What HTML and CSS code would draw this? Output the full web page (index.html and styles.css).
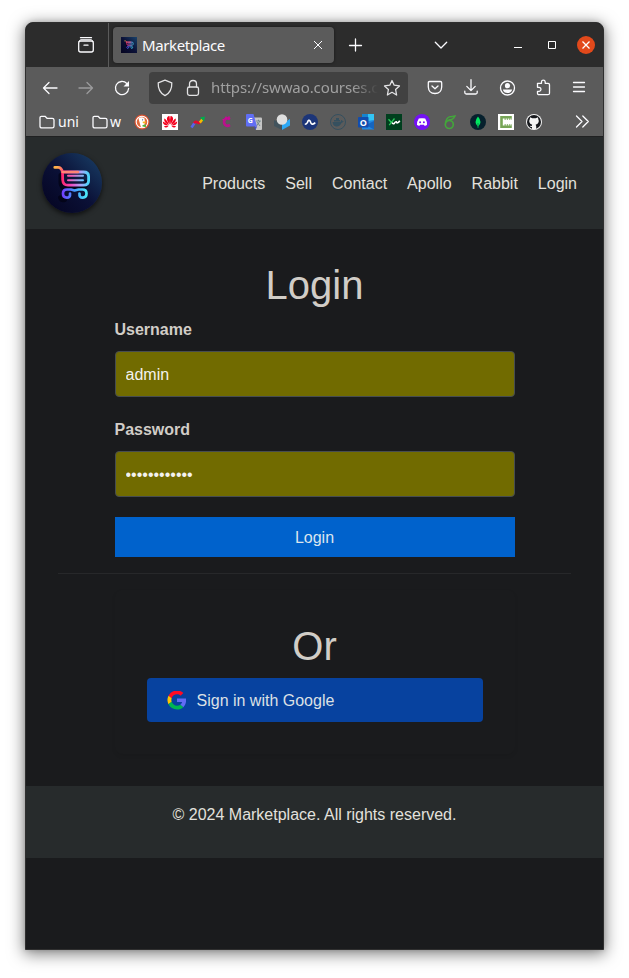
FILE: index.html
```html
<!DOCTYPE html>
<html lang="en">
<head>
<meta charset="utf-8">
<title>Marketplace</title>
<link rel="stylesheet" href="styles.css">
</head>
<body>
<svg class="defs" width="0" height="0" aria-hidden="true">
  <defs>
    <linearGradient id="night" x1="0" y1="1" x2="1" y2="0"><stop offset="0" stop-color="#04031f"/><stop offset=".5" stop-color="#0b1137"/><stop offset="1" stop-color="#1a426a"/></linearGradient>
    <linearGradient id="neon" gradientUnits="userSpaceOnUse" x1="14" y1="16" x2="47" y2="34"><stop offset="0" stop-color="#ffb04a"/><stop offset=".2" stop-color="#ff4d77"/><stop offset=".45" stop-color="#f35ab8"/><stop offset=".75" stop-color="#70c4ff"/><stop offset="1" stop-color="#35dcf4"/></linearGradient>
    <linearGradient id="basket" gradientUnits="userSpaceOnUse" x1="20" y1="26" x2="47" y2="27"><stop offset="0" stop-color="#ff246b"/><stop offset=".35" stop-color="#f04bc0"/><stop offset=".7" stop-color="#aaa5fa"/><stop offset="1" stop-color="#45d7fa"/></linearGradient>
    <linearGradient id="wheels" gradientUnits="userSpaceOnUse" x1="20" y1="40" x2="45" y2="40"><stop offset="0" stop-color="#743bff"/><stop offset=".5" stop-color="#449bff"/><stop offset="1" stop-color="#4ce9f8"/></linearGradient>
    <symbol id="cart" viewBox="0 0 60 60">
      <g fill="none" stroke-linecap="round" stroke-linejoin="round">
        <g stroke="#02020f" stroke-opacity=".65" stroke-width="4" transform="translate(-2 3)"><path d="M20.500 19V27Q21 32.200 26 32.200H41Q46.500 32.200 46.500 26M20 41.500Q21 45 25 44"/></g>
        <path d="M12.800 14.400H16Q19.500 14.400 20.500 19" stroke="url(#neon)" stroke-width="2.800"/>
        <path d="M20.500 19H41.500Q46.600 19 46.600 23.500V27.500Q46.600 32.200 41.500 32.200H26Q21 32.200 20.700 27Z" stroke="url(#basket)" stroke-width="2.800"/>
        <path d="M20.500 19H36" stroke="#ff8575" stroke-width="2.400"/>
        <path d="M26 22.800H41M26 27.300H41" stroke="url(#neon)" stroke-width="2"/>
        <path d="M28 40.500Q28.500 44.700 24.800 44.700Q21 44.500 21 40.500Q21 36.500 25 36.500H29L32.500 37.500L36.500 36.500H40.500Q44.500 36.500 44.500 40.500Q44.500 44.500 40.800 44.700Q37 44.700 37.500 40.500" stroke="url(#wheels)" stroke-width="2.700"/>
      </g>
    </symbol>
  </defs>
</svg>
<div class="window">
  <div class="tabstrip">
    <div class="recent"><svg class="ico" viewBox="0 0 18 18"><path d="M3.500 1.700H14.500"/><rect x="1.700" y="5" width="14.600" height="11" rx="2"/><path d="M7 9.200H11"/><path d="M2 5.500Q2.600 3.700 4 3.700H14Q15.400 3.700 16 5.500" stroke-width="1"/></svg></div>
    <div class="tab">
      <svg class="fav" viewBox="0 0 16 16"><rect width="16" height="16" fill="url(#night)"/><use href="#cart" x=".5" y=".3" width="15" height="15"/></svg>
      <span class="tab-title">Marketplace</span>
      <svg class="tab-x" viewBox="0 0 10 10"><path d="M1 1L9 9M9 1L1 9"/></svg>
    </div>
    <svg class="ico plus" viewBox="0 0 18 18"><path d="M8.500 3V15M2.500 9.500H14.500"/></svg>
    <svg class="ico alltabs" viewBox="0 0 18 18"><path d="M3.300 6.300L9 12L14.700 6.300"/></svg>
    <div class="winbtns">
      <svg viewBox="0 0 18 18"><path d="M5 11.500H13"/></svg>
      <svg viewBox="0 0 18 18"><path d="M5.500 5.500H12.500V12.500H5.500Z"/></svg>
      <svg viewBox="0 0 18 18"><circle cx="9" cy="9" r="9" class="closebg"/><path d="M5.500 5.500L12.500 12.500M12.500 5.500L5.500 12.500" stroke-width="1.300"/></svg>
    </div>
  </div>
  <div class="toolbar">
    <svg class="ico" viewBox="0 0 18 18"><path d="M16 9H2.500M8 3.500L2.500 9L8 14.500"/></svg>
    <svg class="ico dim" viewBox="0 0 18 18"><path d="M2 9H15.500M10 3.500L15.500 9L10 14.500"/></svg>
    <svg class="ico" viewBox="0 0 18 18"><path d="M15.600 9.500A6.600 6.600 0 1 1 13.800 4.500L15.200 6"/><path d="M16 2V7.500H10.500Z" fill="#fbfbfe" stroke="none"/></svg>
    <div class="urlbar">
      <svg class="ico soft" viewBox="0 0 18 18"><path d="M9 1.200L15.800 3.800Q16.200 13 9 16.700Q1.800 13 2.200 3.800Z"/></svg>
      <svg class="ico soft" viewBox="0 0 18 18"><rect x="3.500" y="8" width="11" height="8.400" rx="1.800"/><path d="M5.500 8V5Q5.500 1.500 9 1.500Q12.500 1.500 12.500 5V8"/></svg>
      <span class="url">https://swwao.courses.c</span>
      <svg class="ico soft star" viewBox="0 0 18 18"><path d="M9 1.500L11.200 6.200L16.500 6.900L12.600 10.500L13.600 16L9 13.300L4.400 16L5.400 10.500L1.500 6.900L6.800 6.200Z"/></svg>
    </div>
    <div class="actions">
      <svg class="ico" viewBox="0 0 18 18"><path d="M3.600 2.500H14.400Q15.700 2.500 15.700 3.800V8Q15.300 14.500 9 14.500Q2.700 14.500 2.300 8V3.800Q2.300 2.500 3.600 2.500ZM6 7L9 9.800L12 7"/></svg>
      <svg class="ico" viewBox="0 0 18 18"><path d="M9 .7V11.500M4.800 7.400L9 11.600L13.200 7.400M2.800 12.200V13.500Q2.800 15 4.300 15H13.700Q15.200 15 15.200 13.500V12.200"/></svg>
      <svg class="ico" viewBox="0 0 18 18"><circle cx="9.500" cy="9" r="7"/><circle cx="9.500" cy="6.700" r="2.600" fill="#fbfbfe" stroke="none"/><path d="M4.800 10.500H14.200Q13.200 14 9.500 14Q5.800 14 4.800 10.500Z" fill="#fbfbfe" stroke="none"/></svg>
      <svg class="ico" viewBox="0 0 18 18"><path d="M3.500 4.300H7.500V2.800Q7.600 1.200 9.300 1.200Q11 1.200 11.200 2.800V4.300H14Q15.500 4.300 15.500 5.800V14.200Q15.500 15.700 14 15.700H5Q3.500 15.700 3.500 14.200V12.300H5.200Q7 12 7 10.200Q7 8.500 5.200 8.300H3.500V4.300"/></svg>
      <svg class="ico" viewBox="0 0 18 18"><path d="M3.500 3.500H14.500M3.500 8H14.500M3.500 12.500H14.500"/></svg>
    </div>
  </div>
  <div class="bookmarks">
    <div class="folder"><svg class="ico" viewBox="0 0 18 18"><path d="M3.300 3.300H7L9 5.300H14.200Q16 5.300 16 7V13.200Q16 14.900 14.200 14.900H3.800Q2 14.900 2 13.200V4.600Q2 3.300 3.300 3.300Z"/></svg><span>uni</span></div>
    <div class="folder second"><svg class="ico" viewBox="0 0 18 18"><path d="M3.300 3.300H7L9 5.300H14.200Q16 5.300 16 7V13.200Q16 14.900 14.200 14.900H3.800Q2 14.900 2 13.200V4.600Q2 3.300 3.300 3.300Z"/></svg><span>w</span></div>
    <div class="sites">
      <svg viewBox="0 0 16 16"><circle cx="8" cy="8" r="7.500" fill="#d9502e"/><circle cx="8" cy="8" r="5.800" fill="#e06a3c" stroke="#fff" stroke-width="1.100"/><path d="M4.500 4.500Q7.500 2 10.500 4.500L11 8L9.700 13.500H7Z" fill="#fff"/><circle cx="8.600" cy="5.800" r=".6" fill="#38547a"/><path d="M8.500 7.800L12 7.300L11.500 9.200H9Z" fill="#f9b51d"/><path d="M8.500 11L12 10.500V13L8.500 12.500Z" fill="#4eb33d"/></svg>
      <svg viewBox="0 0 16 16"><rect width="16" height="16" fill="#fff"/><g fill="#f5001d"><path d="M7.600 10.500Q3.800 5.500 5.300 3.200Q6 2 7.500 2Q8.300 5 7.600 10.500ZM8.400 10.500Q12.200 5.500 10.700 3.200Q10 2 8.500 2Q7.700 5 8.400 10.500Z"/><path d="M7 11Q1.500 8.500 2.200 4.500Q5 5.500 7 11ZM9 11Q14.500 8.500 13.800 4.500Q11 5.500 9 11Z"/><path d="M6.700 11.500Q1 12 .8 7.500Q3.500 8.500 6.700 11.500ZM9.300 11.500Q15 12 15.200 7.500Q12.500 8.500 9.300 11.500Z"/><path d="M6.500 12H2Q3.500 15 6.500 12ZM9.500 12H14Q12.500 15 9.500 12Z"/></g></svg>
      <svg viewBox="0 0 16 16"><g fill="none" stroke-width="2.600"><path d="M1.500 13.500L4.700 8.800" stroke="#5665ef"/><path d="M4.200 9.300Q5.500 6.800 7.300 8.300Q9 9.700 10.500 7.700" stroke="#e40b2c"/><path d="M9.800 8.600L12.500 5.300" stroke="#f6b900"/></g><path d="M10 3.500L15 2.500L14 7.500Z" fill="#00ad4d"/></svg>
      <svg viewBox="0 0 16 16"><path d="M12 5.200Q9 3.500 7 5.200Q5 8 7 10.800Q9 12.700 12 11" fill="none" stroke="#b9128b" stroke-width="2.600"/><path d="M11 2.300V5.500M8 2.500V5M4.500 5.500H6" stroke="#d3009e" stroke-width="1.200"/></svg>
      <svg viewBox="0 0 16 16"><path d="M6 3.500H15Q16 3.500 16 4.500V15Q16 16 15 16H10Z" fill="#c5c5c5"/><path d="M10 7H14.800M12.500 5.700V7M10.500 12L14 7M11 8L14 12" fill="none" stroke="#607c82" stroke-width=".8"/><path d="M1 0H7.500L11 12.500H1Q0 12.500 0 11.500V1Q0 0 1 0Z" fill="#606ef4"/><path d="M8 12.500H11L9.500 16Z" fill="#4450c2"/><text x="1.800" y="9" class="mini">G</text></svg>
      <svg viewBox="0 0 16 16"><path d="M0 6L8 10V16L0 12Z" fill="#42535d"/><path d="M16 5L8 10V16L16 11.500Z" fill="#2da8f5"/><circle cx="8" cy="5.500" r="5.300" fill="#dedede"/></svg>
      <svg viewBox="0 0 16 16"><circle cx="8" cy="8" r="8" fill="#1c3578"/><path d="M2.800 10.300Q4.500 10.300 5.500 8.300Q6.700 5 8 7L9 9.200Q10.500 11.300 13.300 8.700" fill="none" stroke="#fff" stroke-width="1.600"/></svg>
      <svg viewBox="0 0 16 16"><circle cx="8" cy="8" r="7.500" fill="none" stroke="#35505f"/><path d="M2.500 8H10.500Q11 5.500 12 6L12.500 7.200H14Q12 9 11.500 9Q9.500 13 6 12.500Q3 12 2.500 8ZM4 6H10V7.500H4ZM6 4H9V6H6Z" fill="#35505f"/></svg>
      <svg viewBox="0 0 16 16"><rect x="4" width="12" height="8" fill="#32c5f4"/><rect x="4" width="6" height="5" fill="#1684cf"/><path d="M4 8L16 6V15.500H4Z" fill="#2288e1"/><path d="M8 11L16 7V15.500Z" fill="#1565bf"/><rect y="3" width="10.500" height="10.500" rx=".8" fill="#124dad"/><text x="1.700" y="11.500" class="mini outlook">O</text></svg>
      <svg viewBox="0 0 16 16"><rect width="16" height="16" fill="#003f1e"/><path d="M2.500 5.200L5 8M8.500 4.500L3.200 11.200" fill="none" stroke="#27ca59" stroke-width="1.300"/><path d="M6.200 8.500Q6.800 10.300 8.200 9.500Q9.500 7.500 10.200 7.700Q11 10.500 13.800 6.700" fill="none" stroke="#fff" stroke-width="1.600"/></svg>
      <svg viewBox="0 0 16 16"><circle cx="8" cy="8" r="8" fill="#7411f5"/><path d="M4.800 4.500L7 4.300H9L11.200 4.500Q13.300 7.500 13 11L10.700 12L10 10.700H6L5.300 12L3 11Q2.700 7.500 4.800 4.500Z" fill="#fff"/><circle cx="6.100" cy="8.300" r="1" fill="#7411f5"/><circle cx="9.900" cy="8.300" r="1" fill="#7411f5"/></svg>
      <svg viewBox="0 0 16 16"><circle cx="7.300" cy="10.500" r="4" fill="none" stroke="#43a63b" stroke-width="1.700"/><path d="M3.500 9.500Q4 4 8 2.700Q10 2.800 13 2Q11.500 6 6.500 5.800" fill="none" stroke="#43a63b" stroke-width="1.400"/></svg>
      <svg viewBox="0 0 16 16"><circle cx="8" cy="8" r="8" fill="#06202d"/><path d="M8 2.500Q13 8.500 8 12.700Q3 8.500 8 2.500Z" fill="#00e760"/><path d="M8 9V14" stroke="#00974b"/></svg>
      <svg viewBox="0 0 16 16"><rect width="16" height="16" fill="#fff"/><path d="M13.800 3.200H3.500V12.700H13.800" fill="none" stroke="#77a557" stroke-width="2.600"/><path d="M6.500 5H14M6.500 11H14" fill="none" stroke="#77a557" stroke-width="1.300" stroke-dasharray="1.300 1"/></svg>
      <svg viewBox="0 0 16 16"><circle cx="8" cy="8" r="8" fill="#f5f5f5"/><circle cx="8" cy="8" r="7" fill="#17191d"/><path d="M4 3.300L6.300 4.300H9.700L12 3.300L12.300 5.300Q13 6.500 12.700 8Q12 10.200 9.600 10.700L10.200 12V15H6V13Q4.300 13.300 3.700 11.700L5.800 12L6.200 10.700Q3.800 10.200 3.300 8Q3 6.500 3.800 5.300Z" fill="#f5f5f5"/></svg>
    </div>
    <svg class="ico more" viewBox="0 0 18 18"><path d="M3.500 3L9 8.500L3.500 14M9.800 3L15.300 8.500L9.800 14"/></svg>
  </div>
  <div class="page">
    <header class="header">
      <svg class="logo" viewBox="0 0 60 60"><rect width="60" height="60" fill="url(#night)"/><use href="#cart" width="60" height="60"/></svg>
      <nav class="nav"><a>Products</a><a>Sell</a><a>Contact</a><a>Apollo</a><a>Rabbit</a><a>Login</a></nav>
    </header>
    <main class="main">
      <h1>Login</h1>
      <form class="form">
        <label for="user">Username</label>
        <input id="user" type="text" value="admin">
        <label for="pass">Password</label>
        <input id="pass" type="password" value="abcdefghijkl">
        <button type="button" class="submit">Login</button>
      </form>
      <hr>
      <section class="card">
        <h1>Or</h1>
        <a class="google">
          <svg viewBox="0 0 48 48"><path fill="#ff0b23" d="M24 9.500c3.540 0 6.710 1.220 9.210 3.600l6.850-6.850C35.900 2.380 30.470 0 24 0 14.620 0 6.510 5.380 2.560 13.220l7.980 6.190C12.430 13.720 17.740 9.500 24 9.500z"/><path fill="#606cf4" d="M46.980 24.550c0-1.570-.15-3.090-.38-4.550H24v9.020h12.940c-.58 2.960-2.260 5.480-4.780 7.180l7.730 6c4.510-4.180 7.090-10.360 7.090-17.650z"/><path fill="#ffc400" d="M10.530 28.590A14.500 14.500 0 0 1 10.530 19.410l-7.980-6.190a24 24 0 0 0 0 21.560z"/><path fill="#00b653" d="M24 48c6.480 0 11.930-2.130 15.890-5.810l-7.730-6c-2.150 1.450-4.920 2.300-8.160 2.300-6.260 0-11.570-4.220-13.470-9.910l-7.980 6.190C6.510 42.620 14.620 48 24 48z"/></svg>
          <span>Sign in with Google</span>
        </a>
      </section>
    </main>
    <footer class="footer"><p>© 2024 Marketplace. All rights reserved.</p></footer>
  </div>
</div>
</body>
</html>
```
FILE: styles.css
```css
* { box-sizing: border-box; }
html, body { margin: 0; height: 978px; overflow: hidden; background: #fff; }
body { padding: 22px 25px 28px; }
svg { display: block; flex: none; }
.defs { position: absolute; }

.window {
  display: flex;
  flex-direction: column;
  width: 579px;
  height: 928px;
  border: 1px solid #2f2f2f;
  border-radius: 8px 8px 0 0;
  overflow: hidden;
  background: #1a1b1d;
  box-shadow: 0 3px 16px 1px rgba(0, 0, 0, .5), 0 0 5px rgba(0, 0, 0, .15);
  font-family: "Noto Sans", "Open Sans", sans-serif;
  color: #fbfbfe;
}

.ico {
  width: 18px;
  height: 18px;
  fill: none;
  stroke: #fbfbfe;
  stroke-width: 1.300;
  stroke-linecap: round;
  stroke-linejoin: round;
}
.dim { opacity: .4; }
.soft { stroke: #e2e2e4; }

.tabstrip { display: flex; align-items: center; height: 44px; background: #2c2c2c; flex: none; }
.recent { display: flex; align-items: center; justify-content: flex-end; width: 83px; height: 44px; padding-right: 13px; border-right: 1px solid #5b5b5b; }
.tab { display: flex; align-items: center; width: 221px; height: 36px; margin-left: 4px; padding: 0 11px 0 8px; border-radius: 4px; background: #5b5b5b; box-shadow: 0 0 3px rgba(0, 0, 0, .5); }
.fav { width: 16px; height: 16px; }
.tab-title { margin-left: 5px; flex: 1; font-size: 15px; letter-spacing: -.4px; line-height: 20px; }
.tab-x { width: 10px; height: 10px; fill: none; stroke: #fbfbfe; }
.plus { margin-left: 13px; }
.alltabs { margin-left: 67px; }
.winbtns { display: flex; gap: 16px; margin-left: auto; padding-right: 8px; }
.winbtns svg { width: 18px; height: 18px; fill: none; stroke: #fff; }
.winbtns .closebg { fill: #e2491b; stroke: none; }

.toolbar { display: flex; align-items: center; gap: 18px; height: 41px; padding: 0 15px; background: #5b5b5b; flex: none; }
.urlbar { display: flex; align-items: center; width: 259px; height: 32px; padding: 0 7px; border-radius: 4px; background: #414141; }
.urlbar .soft + .soft { margin-left: 10px; }
.url { width: 167px; margin-left: 9px; padding-bottom: 2px; overflow: hidden; white-space: nowrap; font-size: 15px; letter-spacing: -.1px; color: #a0a0a0; -webkit-mask-image: linear-gradient(90deg, #000 85%, transparent); mask-image: linear-gradient(90deg, #000 85%, transparent); }
.star { margin-left: 5px; }
.actions { display: flex; gap: 18px; }

.bookmarks { display: flex; align-items: center; height: 29px; padding: 0 12px 1px 12px; border-bottom: 1px solid #202122; background: #5b5b5b; flex: none; font-size: 14px; }
.folder { display: flex; align-items: center; gap: 2px; width: 53px; }
.folder.second { width: 43px; gap: 1px; }
.sites { display: flex; gap: 12px; }
.sites svg { width: 16px; height: 16px; }
.mini { font: bold 7px "Open Sans", sans-serif; fill: #fff; }
.outlook { font-size: 9px; }
.more { margin-left: auto; }

.page { flex: 1; margin-top: -1px; padding-top: 1px; font: 16px/24px "Liberation Sans", Arial, sans-serif; color: #d1cdc7; }
.header { display: flex; align-items: center; justify-content: space-between; height: 92px; padding: 0 26px 0 16px; background: #272b2c; color: #e3e1dd; }
.logo { width: 60px; height: 60px; border-radius: 50%; box-shadow: 0 2px 5px rgba(0, 0, 0, .65); }
.nav { display: flex; gap: 20px; padding-top: 2px; }
.main { padding: 32px; }
h1 { margin: 0 0 8px; font-size: 40px; line-height: 48px; font-weight: 400; text-align: center; }
.form { display: flex; flex-direction: column; width: 400px; margin: 0 auto; }
label { margin-bottom: 9px; padding-top: 1px; font-weight: 700; }
input { height: 46px; margin: 0 0 20px; padding: 11px 10px 9px; border: 1px solid #474d50; border-radius: 4px; background: #716b00; color: #f4f2ee; font: inherit; outline: none; }
.submit { height: 40px; padding: 2px 0 0; border: 0; background: #0062cc; color: #dce5ee; font: inherit; }
hr { height: 1px; margin: 16px 0; border: 0; background: #27282a; }
.card { width: 400px; margin: 0 auto; padding: 32px; border-radius: 8px; box-shadow: 0 2px 4px rgba(0, 0, 0, .07); }
.google { display: flex; align-items: center; gap: 10px; height: 44px; padding: 0 20px; border-radius: 4px; background: #07429f; color: #dce0e5; }
.google svg { width: 20px; height: 20px; padding: .5px; }
.google span { padding-top: 2px; }
.footer { height: 72px; padding: 17px 16px 15px; background: #272b2c; color: #e3e1dd; text-align: center; }
.footer p { margin: 0; }
```
